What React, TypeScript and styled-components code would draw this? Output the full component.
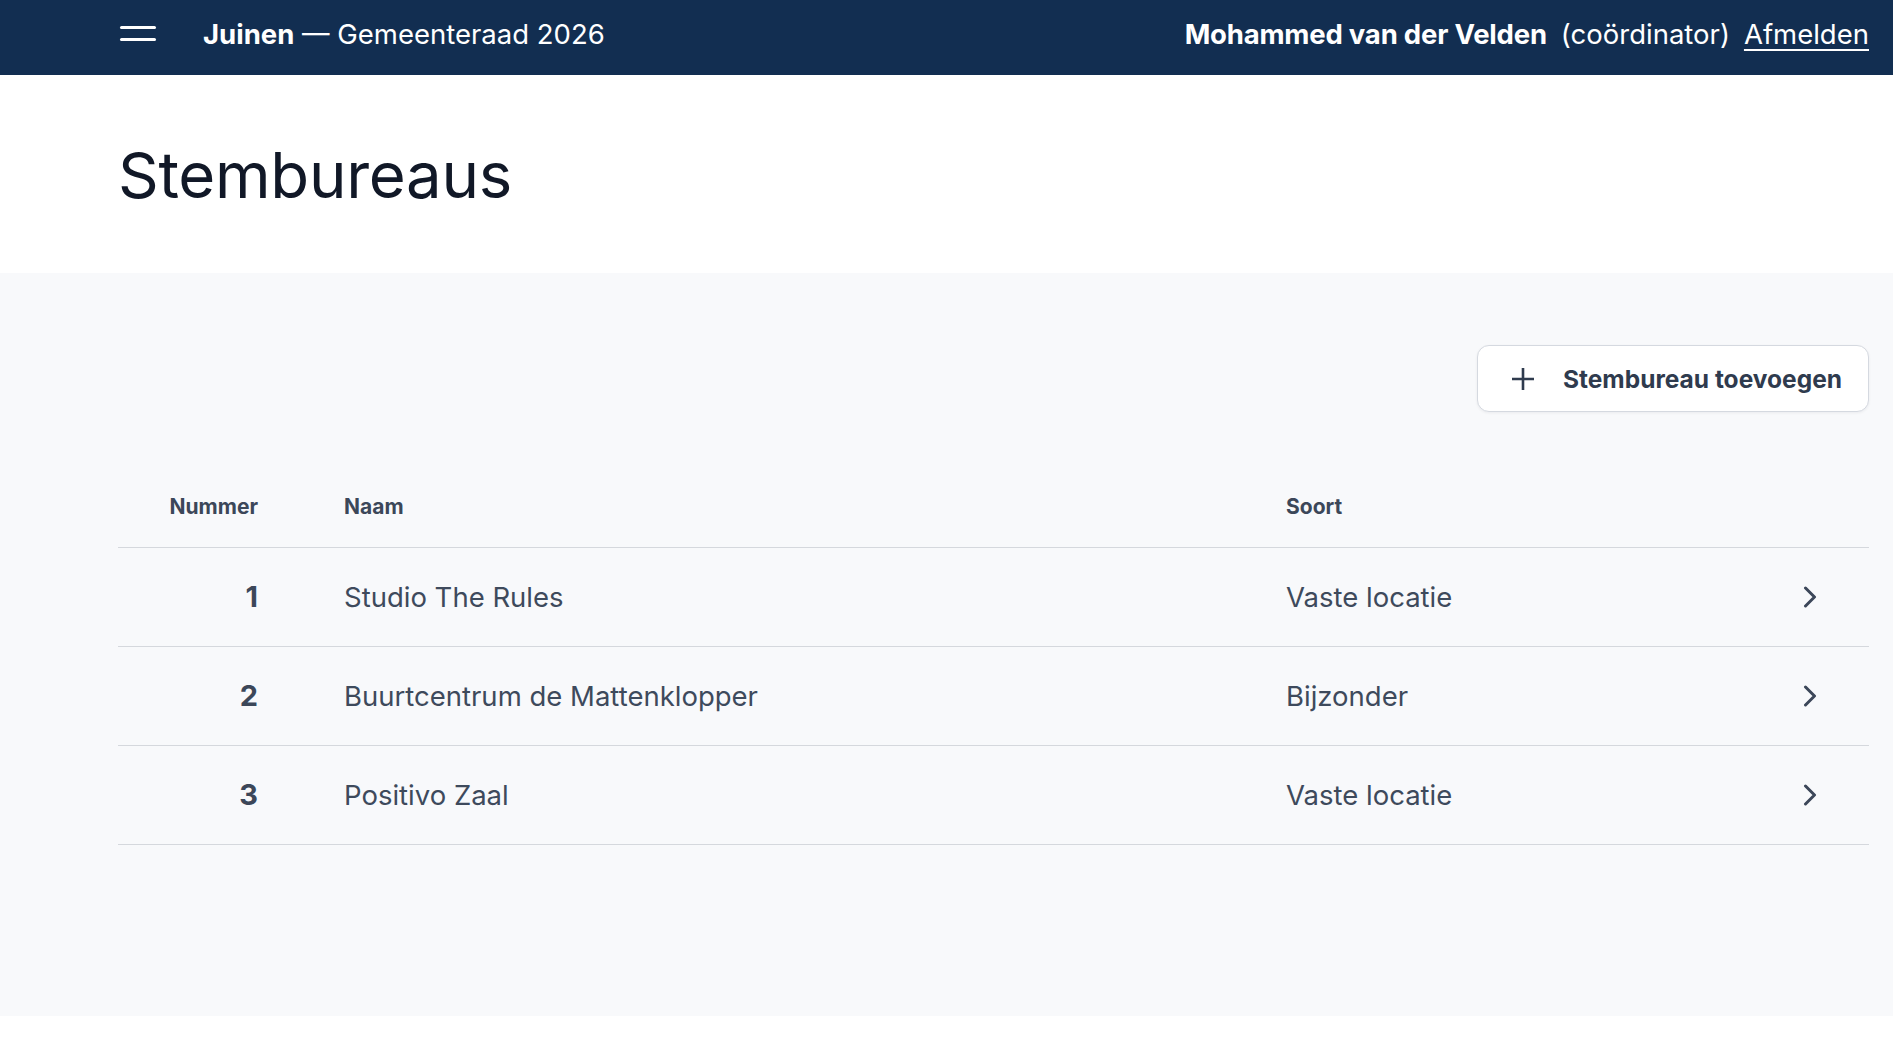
import React from 'react';
import styled, { createGlobalStyle } from 'styled-components';

/* ---------- Global ---------- */
const GlobalStyle = createGlobalStyle`
  html, body {
    margin: 0;
    padding: 0;
    background: #ffffff;
    font-family: 'Inter', 'Liberation Sans', sans-serif;
    color: #0f172a;
  }
  * { box-sizing: border-box; }
`;

/* ---------- Header ---------- */
const TopBar = styled.header`
  height: 75px;
  background: #122e51;
  color: #ffffff;
  display: flex;
  align-items: center;
  justify-content: space-between;
  padding: 0 24px 8px 120px;
  font-size: 27.5px;
`;

const LeftGroup = styled.div`
  display: flex;
  align-items: center;
  gap: 47px;
`;

const MenuButton = styled.button`
  background: none;
  border: none;
  padding: 0;
  width: 36px;
  height: 15px;
  display: flex;
  flex-direction: column;
  justify-content: space-between;
  cursor: pointer;

  span {
    display: block;
    height: 3px;
    border-radius: 2px;
    background: #ffffff;
  }
`;

const Election = styled.div`
  strong { font-weight: 700; }
`;

const UserGroup = styled.div`
  display: flex;
  align-items: center;
  gap: 14px;

  strong { font-weight: 700; letter-spacing: -0.2px; }
`;

const Logout = styled.a`
  color: #ffffff;
  text-decoration: underline;
  text-underline-offset: 5px;
  text-decoration-thickness: 2px;
  cursor: pointer;
`;

/* ---------- Page ---------- */
const TitleArea = styled.div`
  height: 198px;
  padding: 0 24px 0 118px;
  display: flex;
  align-items: center;
`;

const Title = styled.h1`
  margin: 0;
  font-size: 63.5px;
  font-weight: 400;
  color: #111827;
  letter-spacing: -0.3px;
`;

const Main = styled.main`
  background: #f8f9fb;
  padding: 72px 24px 171px 118px;
`;

const Toolbar = styled.div`
  display: flex;
  justify-content: flex-end;
  margin-bottom: 55px;
`;

const AddButton = styled.button`
  display: flex;
  align-items: center;
  gap: 28px;
  height: 67px;
  padding: 0 26px 0 33px;
  background: #ffffff;
  border: 1px solid #d5d9e0;
  border-radius: 12px;
  box-shadow: 0 1px 3px rgba(15, 23, 42, 0.06);
  font-family: inherit;
  font-size: 24.5px;
  font-weight: 700;
  color: #2f3b4e;
  cursor: pointer;
`;

const Table = styled.table`
  width: 100%;
  border-collapse: collapse;
  table-layout: fixed;
`;

const HeadCell = styled.th<{ $align?: 'left' | 'right'; $width?: number }>`
  text-align: ${(p) => p.$align || 'left'};
  width: ${(p) => (p.$width ? `${p.$width}px` : 'auto')};
  font-size: 21px;
  font-weight: 700;
  color: #3c4759;
  height: 80px;
  padding: 0;
  border-bottom: 1px solid #d5d8dd;
`;

const Row = styled.tr`
  height: 99px;
  border-bottom: 1px solid #d5d8dd;
  cursor: pointer;
`;

const NumberCell = styled.td`
  text-align: right;
  font-size: 29px;
  font-weight: 700;
  color: #3c4759;
  padding: 0;
`;

const Cell = styled.td`
  font-size: 27.5px;
  color: #3e4a5c;
  padding: 0;
`;

const ChevronCell = styled.td`
  padding: 0;
  color: #3c4759;
  vertical-align: middle;

  svg { display: block; }
`;

const Gap = styled.td`
  padding: 0;
`;

/* ---------- Icons ---------- */
const Plus = () => (
  <svg width="24" height="24" viewBox="0 0 24 24" fill="none" stroke="#2f3b4e" strokeWidth="2.6">
    <path d="M12 1v22M1 12h22" />
  </svg>
);

const Chevron = () => (
  <svg width="14" height="22" viewBox="0 0 14 22" fill="none" stroke="currentColor" strokeWidth="3" strokeLinecap="round" strokeLinejoin="round">
    <path d="M2.5 2l9 9-9 9" />
  </svg>
);

/* ---------- Data ---------- */
const stations = [
  { nr: 1, name: 'Studio The Rules', kind: 'Vaste locatie' },
  { nr: 2, name: 'Buurtcentrum de Mattenklopper', kind: 'Bijzonder' },
  { nr: 3, name: 'Positivo Zaal', kind: 'Vaste locatie' },
];

/* ---------- Main Component ---------- */
export default function App() {
  return (
    <>
      <GlobalStyle />
      <TopBar>
        <LeftGroup>
          <MenuButton aria-label="Menu">
            <span />
            <span />
          </MenuButton>
          <Election>
            <strong>Juinen</strong> — Gemeenteraad 2026
          </Election>
        </LeftGroup>
        <UserGroup>
          <strong>Mohammed van der Velden</strong>
          <span>(coördinator)</span>
          <Logout>Afmelden</Logout>
        </UserGroup>
      </TopBar>

      <TitleArea>
        <Title>Stembureaus</Title>
      </TitleArea>

      <Main>
        <Toolbar>
          <AddButton>
            <Plus />
            Stembureau toevoegen
          </AddButton>
        </Toolbar>

        <Table>
          <thead>
            <tr>
              <HeadCell $align="right" $width={140}>Nummer</HeadCell>
              <HeadCell $width={86} />
              <HeadCell $width={942}>Naam</HeadCell>
              <HeadCell>Soort</HeadCell>
              <HeadCell $width={66} />
            </tr>
          </thead>
          <tbody>
            {stations.map((s) => (
              <Row key={s.nr}>
                <NumberCell>{s.nr}</NumberCell>
                <Gap />
                <Cell>{s.name}</Cell>
                <Cell>{s.kind}</Cell>
                <ChevronCell>
                  <Chevron />
                </ChevronCell>
              </Row>
            ))}
          </tbody>
        </Table>
      </Main>
    </>
  );
}
